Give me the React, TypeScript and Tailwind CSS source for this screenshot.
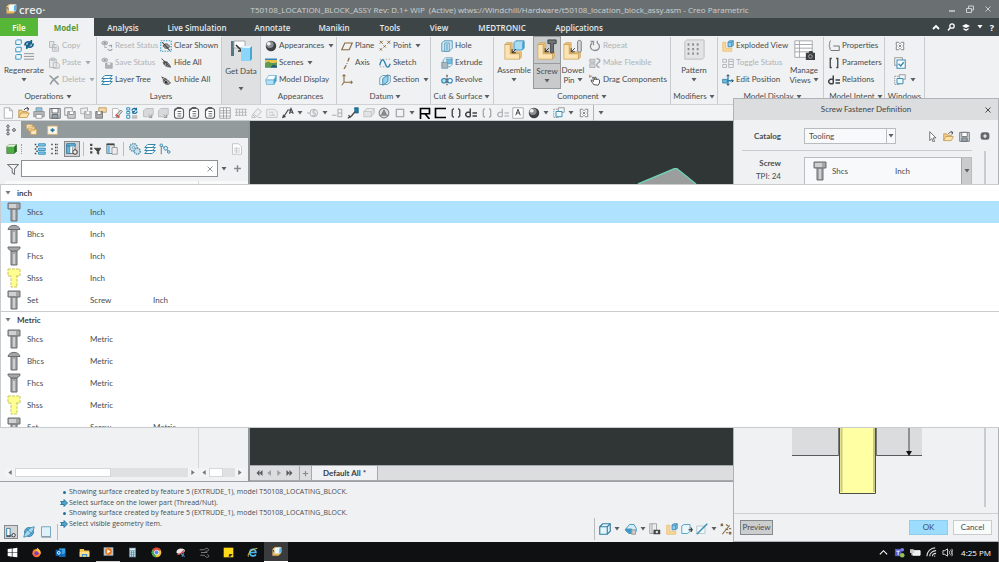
import React from 'react';
import clsx from 'clsx';

const blue = '#2b8fc0';
const sky = '#8fd3f2';
const dim = '#b4b8bb';
const tan = '#e9bb6a';

// Small glyphs, all drawn on a 16 unit grid
const glyphs: Record<string, React.ReactNode> = {
    copy: <g fill="#e4e6e7" stroke={dim} strokeWidth="1.2"><path d="M2 2h6v8H2zM6 6h5l3 3v6H6z" /><path d="M8 10h4M8 12h4" /></g>,
    paste: <g fill="#e8eaeb" stroke={dim} strokeWidth="1.2"><path d="M2 3h9v11H2zM4 1.500h5v3H4zM7 7h5l3 3v5H7z" /></g>,
    cross: <path d="M2 2c4 3 8 8 12 12M14 3C9 6 5 9 3 14" stroke="#96999b" strokeWidth="2" fill="none" />,
    resetStatus: <g fill="#c4c7c9" stroke="#9a9ea1" strokeWidth="1"><ellipse cx="5" cy="4" rx="4" ry="2.500" /><circle cx="5" cy="4" r="1" fill="#777" /><path d="M5 7v3h3" fill="none" /><path d="M10 8l4-1v3M9 12c2 3 5 2 6 0" fill="none" strokeWidth="1.500" /></g>,
    saveStatus: <g fill="#c4c7c9" stroke="#a5a9ac" strokeWidth="1"><ellipse cx="5" cy="4" rx="4" ry="2.500" /><circle cx="5" cy="4" r="1" fill="#777" /><path d="M6 8h9v7H6z" fill="#b0b3b5" /><path d="M8 8v3h5V8" fill="#eee" /></g>,
    layers: <g fill="#fff" stroke="#2d83a8" strokeWidth="1.300"><path d="M1 14l4-4h10l-4 4z" /><path d="M1 10l4-4h10l-4 4z" /><path d="M1 6l4-4h10l-4 4z" /></g>,
    clearShown: <g fill="none"><path d="M1 1h14v14H1z" stroke="#3b9fc4" strokeWidth="1.600" strokeDasharray="2 1.500" /><path d="M4 8c2-4 7-4 9 1-3 3-7 3-9-1z" fill="#999" stroke="#444" /><path d="M3 3l10 11" stroke="#333" strokeWidth="1.400" /></g>,
    hide: <g><path d="M4 7c3-3 8 1 10 6-5 1-9-2-10-6z" fill="#999" stroke="#444" /><path d="M2 2l12 12M6 5v5M9 6v6" stroke="#444" strokeWidth="1.200" fill="none" /></g>,
    unhide: <g><path d="M4 9c3-4 8 0 10 3-4 4-9 1-10-3z" fill="#aaa" stroke="#444" /><path d="M2 4l7 3M3 6l8 7" stroke="#444" strokeWidth="1.300" fill="none" /><circle cx="8" cy="11" r="1.500" fill="#222" /></g>,
    sphere: <g><circle cx="8" cy="8" r="7" fill="#3f4345" /><ellipse cx="6.500" cy="6" rx="5" ry="4.500" fill="#8d9193" /><ellipse cx="5" cy="5" rx="2.500" ry="2.200" fill="#f3f3f3" /></g>,
    scene: <g><path d="M0 2h16v12H0z" fill="#3783b7" /><path d="M0 4h16v4H0z" fill="#e9c44d" /><path d="M0 8l5-2 4 3 7-2v7H0z" fill="#5d9b4c" /><path d="M7 14l4-4 5 2v2z" fill="#24577c" /></g>,
    display: <g stroke="#6aaed0" strokeWidth="1"><path d="M1 8l4-6h10l-3 6z" fill="#f5fcff" /><path d="M1 8h11v6H2z" fill="#aee0f6" /><path d="M12 8l3-6v7l-3 5z" fill="#3897c6" /></g>,
    plane: <path d="M1 13L5 4h10l-4 9z" fill="none" stroke="#8a6a3d" strokeWidth="1.500" />,
    axis: <path d="M11 1L9 6M8 8v1M7 11l-3 5" stroke="#8a6a3d" strokeWidth="1.700" fill="none" />,
    csys: <path d="M4 1v10h11M4 11l-3 4M2 3l2-2 2 2M13 9l2 2-2 2" stroke="#8a6a3d" strokeWidth="1.400" fill="none" />,
    points: <path d="M1 1l4 4M5 1L1 5M6 7l3 3M9 7l-3 3M11 1l4 4M15 1l-4 4M1 11l3 3M4 11l-3 3" stroke="#8a6a3d" strokeWidth="1.300" fill="none" />,
    sketch: <g fill="none"><path d="M1 3h14M1 13h14" stroke="#999" strokeDasharray="2 2" /><path d="M1 11c2-9 5-9 7-3s4 8 7 1" stroke="#2a83b4" strokeWidth="1.800" /></g>,
    section: <g stroke="#4a87a5"><path d="M1 5l4-3h10v9l-4 3H1z" fill="#e9f6fb" /><path d="M5 6l7-5v9l-7 5z" fill={sky} strokeWidth="1.300" /></g>,
    hole: <g stroke="#3d83a5"><path d="M1 4l3-3h11v10l-4 4H1z" fill="#c9e9f6" /><path d="M5 4h6v11H5z" fill="#fff" /><path d="M7 5v9M9 5v9" stroke={blue} /></g>,
    extrude: <g stroke="#5c94b0"><path d="M3 4l3-3h9v9l-3 3H3z" fill="#e6f5fb" /><path d="M1 7h8v8H1z" fill="#aab8be" /><path d="M9 7l5-5" /><path d="M7 3h7v6h-5z" fill="#70c1e8" /></g>,
    revolve: <g fill="none" stroke="#2a83b4" strokeWidth="1.500"><ellipse cx="4" cy="9" rx="3" ry="3" fill="#b9e2f3" /><ellipse cx="12" cy="9" rx="3" ry="3" fill="#fff" /><path d="M8 1v14" stroke="#444" strokeDasharray="3 1" /></g>,
    repeat: <g fill="none" stroke="#8b8f92" strokeWidth="1.700"><path d="M4 4c-4 4-2 10 4 10s8-7 3-10" /><path d="M2 2h4v5M11 1v3" /></g>,
    flexible: <g fill="#d2d5d6" stroke="#a6aaad" strokeWidth="1.100"><path d="M1 3h7v4H1zM1 9h7v5H1z" /><path d="M10 2c6 1 5 4 2 6s-2 5 2 6" fill="none" strokeWidth="2" /></g>,
    drag: <g fill="#fff" stroke="#444" strokeWidth="1.200"><path d="M6 14c-1-3-4-4-3-6 1 0 2 2 3 2L5 4c2 0 2 2 3 4V4c2 0 2 3 2 4 1-2 3-1 4 0v4l-2 3z" /><path d="M1 1v4M0 3h4" stroke="#a38454" /></g>,
    explode: <g><path d="M1 3h4v8h8v4H1z" fill="#f6d79c" stroke={tan} /><path d="M8 3l2-2h5v6l-2 2H8z" fill="#8bcdec" stroke="#2b7ca5" /><path d="M8 3h5v6M13 3l2-2" stroke="#2b7ca5" fill="none" /></g>,
    toggle: <g fill="none" stroke={dim} strokeWidth="1.300"><path d="M1 3h5v4H1zM1 10h5v4H1zM9 3h6v11H9zM9 6h6M9 10h6" /></g>,
    editPos: <g fill="none" stroke="#2a83b4" strokeWidth="1.800"><path d="M8 1v14M1 9h14" /><path d="M6 3l2-2 2 2M6 13l2 2 2-2M13 7l2 2-2 2" stroke="#444" strokeWidth="1.300" /><rect x="1" y="7" width="6" height="5" fill="#6bbbe0" stroke="#2b7ca5" strokeWidth="1" /></g>,
    props: <g fill="none" stroke="#666b6e" strokeWidth="1.200"><path d="M4 1C0 3 4 6 1 8c3 1 0 4 3 6h11V8H7" /></g>,
    params: <path d="M5 2H3v12h2M11 2h2v12h-2" fill="none" stroke="#3f4446" strokeWidth="1.700" />,
    parens: <path d="M5 2L3 4v8l2 2M11 2l2 2v8l-2 2" fill="none" stroke="#3f4446" strokeWidth="1.800" />,
    parensDim: <path d="M5 2L3 4v8l2 2M11 2l2 2v8l-2 2" fill="none" stroke="#9a9ea0" strokeWidth="1.500" />,
    rel: <path d="M7 2v11M7 7H3L1 9v2l2 2h4M10 8h6M10 12h6" fill="none" stroke="#3f4446" strokeWidth="2" />,
    relDim: <path d="M7 2v11M7 7H3L1 9v2l2 2h4M10 8h6M10 12h6" fill="none" stroke="#a4a8aa" strokeWidth="1.500" />,
    closeWin: <path d="M3 3h3l2 2 2-2h3v4l-1.500 1 1.500 1v4h-3l-2-2-2 2H3V9l1.500-1L3 7zM6 6l4 4M10 6l-4 4" fill="#fff" stroke="#6b7073" strokeWidth="1.100" />,
    activate: <g fill="#fff" stroke="#3a8db5" strokeWidth="1.400"><path d="M1 1h10v10H1z" stroke="#999" /><path d="M4 4h11v11H4z" /><path d="M6 9l3 3 4-5" fill="none" strokeWidth="2" /></g>,
    windows: <g fill="#eef8fc" stroke="#3a8db5" strokeWidth="1.300"><path d="M7 1h8v6H7z" stroke="#999" /><path d="M1 3h6v11H1z" stroke="#999" strokeDasharray="2 1" /><path d="M4 6h8v7H4z" /></g>,
    page: <path d="M3 1h7l4 4v10H3zM10 1v4h4" fill="#fff" stroke="#9a9fa2" />,
    folder: <g><path d="M1 14V4h4l1 2h6v3" fill="#f6cf86" stroke="#b78c48" /><path d="M1 14l3-6h11l-3 6z" fill="#ffe3a6" stroke="#b78c48" /><path d="M8 4c2-3 4-3 6-2M12 1l2 1-1 3" fill="none" stroke="#333" strokeWidth="1.300" /></g>,
    print: <g><path d="M4 1h8v5H4z" fill="#8bc7e3" stroke="#888" /><path d="M1 6h14v7H1z" fill="#b4b7b9" stroke="#888" /><path d="M4 10h8v5H4z" fill="#fff" stroke="#888" /></g>,
    save: <g stroke="#656a6e" strokeWidth="1.200"><path d="M1 2h14v13H1z" fill="#d4d8da" /><path d="M4 2h8v6H4z" fill="#fff" /><path d="M4 10h8v5H4z" fill="#98a4ab" /></g>,
    saveAs: <g stroke="#878b8e" strokeWidth="1.200"><path d="M1 1h10v10H1z" fill="#f6f6f6" /><path d="M5 6h10v9H5z" fill="#ccc" /><path d="M7 6v4h6V6" fill="#fff" /></g>,
    saveDim: <g stroke="#9b9fa1"><path d="M1 2l9-1v8H1z" fill="#eee" /><path d="M6 6h9v9H6z" fill="#ccc" /><path d="M8 6v4h5V6" fill="#fff" /></g>,
    backup: <g><path d="M5 1h10v6H5z" fill="#f3d9a6" stroke="#b78c48" /><path d="M1 6h9v9H1z" fill="#aaa" stroke="#666" /><path d="M3 6v4h5V6" fill="#fff" stroke="#777" /></g>,
    erase: <g><path d="M2 2h7l2 3v9H2z" fill="#fff" stroke="#aaa" /><path d="M6 11l7-7 2 2-7 8z" fill="#d5d7d8" stroke="#666" /><path d="M7 10l4 4" stroke="#d6483b" strokeWidth="2" /></g>,
    regen: <g><path d="M1 1h4v3H1zM1 6h4v3H1zM1 11h4v4H1z" fill="#fff" stroke={blue} strokeWidth="1.300" /><path d="M8 12h7M8 14.500h7" stroke="#777" /><path d="M8 5c0-3 3-4 6-2M14 1v3h-3M15 6c-1 3-4 3-6 1M9 9V6h3" fill="none" stroke="#1c6f9d" strokeWidth="1.600" /></g>,
    modelDim: <g fill="#d7d9da" stroke="#b3b6b8"><path d="M2 5l3-3h10v8l-3 3H2z" /><path d="M9 10l4 4M13 10v4H9" stroke="#888" /></g>,
    listWin: <g fill="#fff" stroke="#5a5e61" strokeWidth="1.500"><rect x="2" y="2" width="12" height="13" rx="3" /><path d="M6 6h5M6 9h5M6 12h5" strokeWidth="1.200" /><path d="M2 5l4-4h5" fill="none" strokeWidth="1.800" /></g>,
    grid: <path d="M1 1h14v14H1zM1 5h14M1 8h14M1 12h14M6 1v14M10 1v14" fill="#fff" stroke="#909496" />,
    grid2: <path d="M0 3h16M0 7h16M0 11h16M2 3v9M6 3v9M10 3v9M14 3v9" fill="none" stroke="#b7babc" strokeWidth="1.300" />,
    eraserDim: <path d="M3 9l6-7 5 4-6 7zM2 10l4 4H1zM9 14h5" fill="#eee" stroke="#b0b3b5" />,
    pageDim: <path d="M1 3h10l4 3v8H1zM4 7h6M4 11h8M8 9l3 2" fill="#eee" stroke="#bcbfc1" />,
    leader: <path d="M1 14l3-1-2-2zM3 12l5-8h3M10 9l2-7 3 7M11 7h3" fill="none" stroke="#3f4446" strokeWidth="1.500" />,
    balloon: <path d="M14 8A5 5 0 1 1 4 8a5 5 0 0 1 10 0zM0 8h4M11 5H8v3h3v3H7" fill="none" stroke="#a9adaf" strokeWidth="1.200" />,
    eight: <path d="M0 11h6M8 3h5v5H8zM8 8h5v5H8z" fill="none" stroke="#adb0b2" strokeWidth="1.400" />,
    measure: <g><path d="M10 1h5v7h-4z" fill="#1e7eaa" stroke="#135c80" /><path d="M1 15l5-3 5-6M2 11l3 3" fill="none" stroke="#444" strokeWidth="1.800" /></g>,
    boxDim: <path d="M1 6l4-4h10v6l-4 5H1zM1 6h10l4-4M11 6v7" fill="#e1e3e4" stroke="#b9bcbe" />,
    tri: <g fill="#e0e1e2" stroke="#85898c" strokeWidth="1.500"><circle cx="8" cy="8" r="6.500" /><path d="M8 4l3 6H5zM2 11h12" fill="#888" /></g>,
    square: <path d="M3 3h10v10H3z" fill="none" stroke="#8f9395" strokeWidth="1.300" />,
    boldR: <path d="M2 16V2h12v7H2M8 9l6 7" fill="none" stroke="#000" strokeWidth="2.200" />,
    boldC: <path d="M16 2H2v12h14" fill="none" stroke="#000" strokeWidth="2.200" />,
    boxA: <g><path d="M1 1h14v14H1z" fill="#fff" stroke="#9a9ea0" /><path d="M5 11l3-8 3 8M6 8h4" fill="none" stroke="#444" strokeWidth="1.300" /></g>,
    tree: <g fill="#fff" stroke="#4a4e51" strokeWidth="1.300"><circle cx="4" cy="3" r="1.600" /><circle cx="4" cy="8" r="1.600" /><circle cx="4" cy="13" r="1.600" /><circle cx="12" cy="8" r="1.800" /></g>,
    folders: <g fill="#fff0d0" stroke="#d6a85c" strokeWidth="1.300"><path d="M1 1h8v6H1zM4 4h8v6H4zM7 8h8v7H7z" /></g>,
    favs: <g><path d="M1 3h14v12H1z" fill="#fffaf0" stroke="#deb56f" strokeWidth="1.300" /><path d="M8 6v6M5 9h6" stroke="#2b7ca5" strokeWidth="2.400" /></g>,
    cube: <g><path d="M1 5l3-3h10v9l-3 3H1z" fill="#4fae43" stroke="#5d7c52" /><path d="M1 5l3-3h10l-3 3z" fill="#e3f1e0" /><path d="M11 5l3-3v9l-3 3z" fill="#276e31" /></g>,
    expand: <g><path d="M6 1h9v3H6zM6 7h9v3H6zM6 12h9v3H6z" fill="#8fcbe6" stroke={blue} strokeWidth="1.200" /><path d="M1 2h2M1 8h2M1 14h2M3 5h2M3 11h2" stroke="#444" strokeWidth="1.800" /></g>,
    collapse: <path d="M3 2h2M3 8h2M3 14h2M8 2h4M8 6h4M8 10h4M8 14h4" stroke="#444" strokeWidth="2.200" strokeDasharray="2 1" />,
    cols: <g><path d="M1 1h11v13H1z" fill="#fff" stroke="#4a4e51" /><path d="M1 1h11v3H1zM1 4h4v10H1z" fill="#67b9df" stroke="#317fa5" /><circle cx="12" cy="12" r="3" fill="#eee" stroke="#333" strokeWidth="1.300" /><path d="M9 5v6" stroke="#666" /></g>,
    treeFilter: <g stroke="#444"><path d="M3 1v14" strokeWidth="3" strokeDasharray="3 2" /><path d="M7 7h9l-3 4v4l-2-1v-3z" fill="#444" /></g>,
    treeCols: <g><path d="M1 1h10v13H1z" fill="#dfe9ee" stroke="#54636c" /><path d="M2 4h3v10H2z" fill="#6db9dc" /><path d="M8 6h7v9H8z" fill="#eee" stroke="#888" /><path d="M1 2h10" stroke="#444" strokeWidth="2" /></g>,
    gears: <g fill="#cbe5f0" stroke="#6095ae" strokeWidth="1.200"><circle cx="6" cy="6" r="5" strokeWidth="2" strokeDasharray="2 1" /><circle cx="11" cy="11" r="4" strokeWidth="2" strokeDasharray="2 1" /><circle cx="6" cy="6" r="1.500" fill="#fff" /></g>,
    nodes: <g fill="#dff2fa" stroke="#3a8db5" strokeWidth="1.300"><path d="M3 3v12M3 3l10 8" stroke="#777" fill="none" /><circle cx="3" cy="3" r="1.700" /><circle cx="9" cy="7" r="2.500" /><circle cx="13" cy="12" r="1.700" /></g>,
    sheet: <g><path d="M2 1h8l4 4v10H2z" fill="#fff" stroke="#b3b6b8" /><path d="M4 7h8M4 9.500h8M4 12h8M7 5v9" stroke="#bfc2c4" /></g>,
    funnel: <path d="M1 2h14L10 8v7l-3-2V8z" fill="#f6f6f6" stroke="#74797c" strokeWidth="1.400" />,
    plus: <path d="M8 2v12M2 8h12" stroke="#85898c" strokeWidth="2.600" />,
    x: <path d="M3 3l10 10M13 3L3 13" stroke="currentColor" strokeWidth="1.900" fill="none" />,
    pointer: <path d="M4 1l9 9H9l2 5-2 1-2-5-3 3z" fill="#fff" stroke="#565a5d" strokeWidth="1.200" />,
    pill: <g><rect x="1" y="2" width="14" height="12" rx="4" fill="#63686b" /><path d="M8 5v6M5 8h6" stroke="#fff" strokeWidth="1.800" /></g>,
    go: <path d="M1 5h7V1l7 7-7 7v-4H1l3-3z" fill="#4ea6cf" stroke="#156289" strokeWidth="1.500" />,
    panel: <g><path d="M1 2h5v12H1z" fill="#fff" stroke="#317fa5" strokeWidth="1.400" /><path d="M1 13h7" stroke="#444" strokeWidth="2" /><circle cx="11" cy="12" r="2.500" fill="#eee" stroke="#333" strokeWidth="1.400" /></g>,
    globe: <g><circle cx="8" cy="8" r="6" fill="#62b2da" stroke="#2a6f94" /><path d="M1 15C2 8 8 2 15 1c-1 7-6 12-14 14z" fill="#a5d8ee" stroke="#2a7da8" /><path d="M5 4l7 7" stroke="#2a7da8" /></g>,
    pane: <g><path d="M2 1h12v13H2z" fill="#dff1fa" stroke="#6d9fb8" strokeWidth="1.200" /><path d="M2 15h13" stroke="#888" /></g>,
    wire: <g fill="#e6f5fb" stroke="#327fa3" strokeWidth="1.500"><path d="M1 5l4-4h10v10l-4 4H1z" /><path d="M1 5h10v10M11 5l4-4" fill="none" /></g>,
    shade: <g stroke="#4390b4" strokeWidth="1.200"><path d="M1 8l5-6h6l3 5v4l-3 3H5l-4-4z" fill="#d5effa" /><path d="M1 8h8v5H5l-4-3z" fill="#3c9cc8" /><path d="M9 9h5v6H9z" fill="#ccc" stroke="#999" /></g>,
    snap: <g><path d="M1 1h9v13H1z" fill="#eceded" stroke="#8b8f91" /><path d="M4 1v13" stroke="#8b8f91" /><path d="M6 9h9v6H6z" fill="#444" /><circle cx="10.500" cy="12" r="1.700" fill="#ddd" /></g>,
    box3: <g><path d="M1 4l3-2h8v9l-3 3H1z" fill="#eaf7fc" stroke="#5ba3c4" strokeWidth="1.300" /><path d="M10 9h5M13 6l2 3-2 3" fill="none" stroke="#333" strokeWidth="1.400" /></g>,
    slash: <g fill="none"><path d="M1 4h11v10H1z" fill="#eef7fa" stroke="#a8bcc5" /><path d="M1 15L15 1" stroke="#3a8db5" strokeWidth="1.800" /></g>,
    datum: <path d="M1 1l3 3M4 1L1 4M8 2l3 2M3 15L13 3M7 8l4 1M8 13h3M12 12l3 3M15 12l-3 3M12 7l3 1" fill="none" stroke="#86693f" strokeWidth="1.500" />,
};

const Glyph = ({ name, className = 'size-3' }: { name: string; className?: string }) => (
    <svg viewBox="0 0 16 16" className={clsx('shrink-0', className)} aria-hidden="true">{glyphs[name]}</svg>
);

const Caret = ({ className = 'text-[#5a5f62]' }: { className?: string }) => (
    <svg viewBox="0 0 6 4" className={clsx('h-1 w-[6px] shrink-0', className)} aria-hidden="true"><path d="M0.500 0h5L3 3.500z" fill="currentColor" /></svg>
);

interface CmdProps {
    icon: string;
    label?: string;
    caret?: boolean;
    disabled?: boolean;
}

const Cmd: React.FC<CmdProps> = ({ icon, label, caret, disabled }) => (
    <button type="button" disabled={disabled} aria-label={label ?? icon} className={clsx('flex h-[17px] items-center whitespace-nowrap', disabled ? 'text-[#b0b3b6]' : 'text-[#484d50]')}>
        <Glyph name={icon} />
        {label && <span className="ml-[2px]">{label}</span>}
        {caret && <span className="ml-1"><Caret className={disabled ? 'text-[#a5a9ac]' : 'text-[#5a5f62]'} /></span>}
    </button>
);

const Column = ({ className, items }: { className: string; items: CmdProps[] }) => (
    <div className={clsx('flex shrink-0 flex-col items-start', className)}>
        {items.map((item, i) => <Cmd key={i} {...item} />)}
    </div>
);

const Group = ({ label, caret, className, children }: { label: string; caret?: boolean; className: string; children: React.ReactNode }) => (
    <section className={clsx('flex shrink-0 flex-col border-r border-[#c9cccf]', className)}>
        <div className="flex h-[51px]">{children}</div>
        <div className="flex flex-1 items-center justify-center gap-[2px] pt-[1px] whitespace-nowrap">{label}{caret && <Caret />}</div>
    </section>
);

const Big = ({ children, lines, className, selected }: { children: React.ReactNode; lines: string[]; className: string; selected?: boolean }) => (
    <button type="button" className={clsx('flex shrink-0 flex-col items-center whitespace-nowrap leading-[10px]', className, selected && 'bg-[#c9cacc] outline outline-[#97999b]')}>
        <svg viewBox="0 0 24 24" className="mt-[2px] size-[22px]" aria-hidden="true">{children}</svg>
        <span className={clsx('mt-[2px] w-full pt-[2px]', selected && 'border-t border-[#97999b]')}>{lines[0]}</span>
        <span className="flex h-[10px] items-center gap-[2px]">{lines[1]}<Caret /></span>
    </button>
);

const bracket = (
    <g stroke="#c9a15a" strokeWidth="0.800">
        <path d="M2 6h6v10h10v6H2z" fill="#fbe3b4" />
        <path d="M2 6l2-2h6v10l-2 2V6zM8 16l2-2h10v6l-2 2v-6z" fill="#edc47a" />
    </g>
);

const tabs = [
    ['Analysis', 'w-[58px]'],
    ['Live Simulation', 'w-[90px]'],
    ['Annotate', 'w-[61px]'],
    ['Manikin', 'w-[62px]'],
    ['Tools', 'w-[50px]'],
    ['View', 'w-[48px]'],
    ['MEDTRONIC', 'w-[78px]'],
    ['Applications', 'w-[76px]'],
];

// '-' is a drop-down caret, '|' a separator
const quickTools = [
    'page', 'folder', 'print', 'save', 'saveAs', 'saveDim', 'backup', 'erase', 'regen', 'modelDim', 'modelDim', 'listWin', 'listWin', 'listWin',
    'grid', 'grid2', 'eraserDim', 'pageDim', 'leader', '-', 'balloon', '-', 'eight', 'measure', 'boxDim', 'tri', 'square', '-', 'boldR', 'boldC',
    'parens', 'rel', 'parensDim', 'relDim', 'boxA', 'sphere', '-', 'windows', '-', 'closeWin', '|', '-',
];

type ScrewKind = 'cap' | 'button' | 'flat' | 'shoulder';

const heads: Record<ScrewKind, string> = {
    cap: 'M1 1h12v6H1z',
    button: 'M1 5.500h12C12 0 2 0 1 5.500z',
    flat: 'M1 1h12v1.500L10 5H4L1 2.500z',
    shoulder: 'M1 1h12v7H1z',
};

const Screw = ({ kind }: { kind: ScrewKind }) => {
    const yellow = kind === 'shoulder';
    return (
        <svg viewBox="0 0 14 20" className="h-5 w-[14px] shrink-0" aria-hidden="true">
            <g fill={yellow ? '#ffff8f' : '#a4a6a7'} stroke={yellow ? '#c9c66c' : '#6b6f71'} strokeDasharray={yellow ? '3 1' : undefined}>
                <path d="M4 5h6v14H4z" />
                <path d={heads[kind]} />
            </g>
            {yellow && <path d="M2 2h10v5H2zM5 7h4v11H5z" fill="#ffff8f" />}
            {!yellow && <path d="M7 8v10" stroke="#cfd0d1" strokeWidth="2" />}
            {kind === 'cap' && <path d="M2 4h7" stroke="#cfd0d1" strokeWidth="4" />}
        </svg>
    );
};

interface ScrewRow {
    kind: ScrewKind;
    cells: string[];
}

const rowsFor = (unit: string): ScrewRow[] => [
    { kind: 'cap', cells: ['Shcs', unit] },
    { kind: 'button', cells: ['Bhcs', unit] },
    { kind: 'flat', cells: ['Fhcs', unit] },
    { kind: 'shoulder', cells: ['Shss', unit] },
    { kind: 'cap', cells: ['Set', 'Screw', unit] },
];

const catalog = [
    { title: 'inch', rows: rowsFor('Inch') },
    { title: 'Metric', rows: rowsFor('Metric') },
];

const messages = [
    { prompt: false, text: 'Showing surface created by feature 5 (EXTRUDE_1), model T50108_LOCATING_BLOCK.' },
    { prompt: true, text: 'Select surface on the lower part (Thread/Nut).' },
    { prompt: false, text: 'Showing surface created by feature 5 (EXTRUDE_1), model T50108_LOCATING_BLOCK.' },
    { prompt: true, text: 'Select visible geometry item.' },
];

const creoMark = (
    <>
        <path d="M2 5l3-3h9v9" fill="#f2cd83" stroke="#d8a64d" />
        <path d="M2 5v9h9l3-3V3H5v8z" fill="#e8b75a" />
        <path d="M5 4l2-2h8v7l-2 2H5z" fill="#e9f8ff" />
        <path d="M12 4l3-2v7l-3 2z" fill="#58b5e2" />
    </>
);

const taskApps: { name: string; art: React.ReactNode; state?: 'open' | 'active' }[] = [
    { name: 'Start', art: <path d="M1 3l6-1v5.500H1zM8 2l7-1v6.500H8zM1 8.500h6V14l-6-1zM8 8.500h7V15l-7-1z" fill="#fff" /> },
    { name: 'Firefox', art: <><circle cx="8" cy="9" r="6" fill="#ff7a2f" /><path d="M3 3c1 2 3 1 4 3L9 1c3 2 6 5 5 9z" fill="#ffc33b" /><circle cx="8" cy="9" r="3" fill="#7a3fc4" /><path d="M2 9c1 3 4 4 7 3-2 3-6 2-7-3z" fill="#ef3355" /></> },
    { name: 'Outlook', art: <><path d="M6 2h9v12H6z" fill="#39a5ea" /><path d="M6 8l5 3 4-3v6H6z" fill="#1269b8" /><path d="M1 4h9v9H1z" fill="#0a63b4" /><circle cx="5.500" cy="8.500" r="2" fill="none" stroke="#fff" strokeWidth="1.400" /></> },
    { name: 'Explorer', art: <><path d="M1 3h6l1 2h7v9H1z" fill="#f5c64f" /><path d="M1 7h14v7H1z" fill="#ffe08a" /><path d="M4 10h8v4h-2v-2H6v2H4z" fill="#3f93cf" /></> },
    { name: 'Media Player', state: 'open', art: <><path d="M1 2h14v12H1z" fill="#b9c6cf" /><circle cx="8" cy="8" r="5" fill="#e87a24" /><path d="M6 5l5 3-5 3z" fill="#fff" /></> },
    { name: 'Calculator', art: <><path d="M3 1h10v14H3z" fill="#54809a" /><path d="M4 2h8v3H4z" fill="#dff0f8" /><path d="M4 7h2M7 7h2M10 7h2M4 10h2M7 10h2M10 10h2M4 13h2M7 13h2M10 13h2" stroke="#d8edf7" strokeWidth="1.800" /></> },
    { name: 'Chrome', art: <><circle cx="8" cy="8" r="7" fill="#f3c52e" /><path d="M2 4.500A7 7 0 0 1 14.500 5H8L5 9z" fill="#e2443a" /><path d="M2 4.500L6 11l2 4A7 7 0 0 1 2 4.500z" fill="#3aa757" /><circle cx="8" cy="8" r="3.300" fill="#4a8af4" stroke="#fff" /></> },
    { name: 'Snip', art: <><path d="M2 8c0-6 8-7 12-4 2 4-5 5-8 7z" fill="#ede6e8" /><path d="M3 10c3 1 7-1 10-5" stroke="#d64b57" strokeWidth="2" fill="none" /><path d="M9 10l5 4M13 9l-3 5" stroke="#5a95c9" strokeWidth="1.500" /></> },
    { name: 'Connections', art: <path d="M1 4h5c3 0 2-2 5-2 4 0 4 4 0 4H9M3 8h9M2 12h5c2 0 2 3 5 3s3-4 0-4" fill="none" stroke="#9b9b9b" strokeWidth="1.100" /> },
    { name: 'Notes', art: <><path d="M1 1h14v14H1z" fill="#ffd91a" /><path d="M9 10h5l-3 4H8z" fill="#333" /></> },
    { name: 'Edge', art: <><path d="M4 8h9c0-6-9-6-9 0 0 6 7 6 9 3" fill="none" stroke="#4ab9f2" strokeWidth="2.400" /><path d="M2 14C0 9 8 2 15 2" fill="none" stroke="#f3cf4d" strokeWidth="1.300" /></> },
    { name: 'Creo', state: 'active', art: creoMark },
];

const ScrollBar = ({ className, thumb }: { className: string; thumb: string }) => (
    <div className={clsx('flex h-[9px] bg-[#dfe0e1]', className)} aria-hidden="true">
        <span className="flex w-[10px] items-center justify-center bg-[#f3f4f5]"><svg viewBox="0 0 4 6" className="h-[5px] w-1"><path d="M4 0v6L0 3z" fill="#777" /></svg></span>
        <span className={clsx('border border-[#d5d7d8] bg-white', thumb)} />
        <span className="ml-auto flex w-[10px] items-center justify-center bg-[#f3f4f5]"><svg viewBox="0 0 4 6" className="h-[5px] w-1"><path d="M0 0v6l4-3z" fill="#777" /></svg></span>
    </div>
);

const Ribbon = () => (
    <div className="flex h-[69px] shrink-0 overflow-hidden border-b border-[#cfd1d3] bg-[#eff1f3] pt-[1px]">
        <Group label="Operations" caret className="w-[97px]">
            <Big className="w-12" lines={['Regenerate']}>
                <g fill="#eef8fc" stroke={blue}><path d="M3 2l1-1h5v4l-1 1H3zM3 10l1-1h5v4l-1 1H3zM3 18l1-1h5v4l-1 1H3z" /></g>
                <path d="M12 16h11M12 19h11M12 22h11" stroke="#8c9092" />
                <path d="M13 7c0-4 4-5 7-3M20 1v4h-4M22 5c0 4-4 5-7 3M15 11V7h4" fill="none" stroke="#17638c" strokeWidth="1.800" />
            </Big>
            <Column className="w-12" items={[{ icon: 'copy', label: 'Copy', disabled: true }, { icon: 'paste', label: 'Paste', caret: true, disabled: true }, { icon: 'cross', label: 'Delete', caret: true, disabled: true }]} />
        </Group>
        <Group label="Layers" className="w-[125px] pl-1">
            <Column className="w-[59px]" items={[{ icon: 'resetStatus', label: 'Reset Status', disabled: true }, { icon: 'saveStatus', label: 'Save Status', disabled: true }, { icon: 'layers', label: 'Layer Tree' }]} />
            <Column className="w-[60px]" items={[{ icon: 'clearShown', label: 'Clear Shown' }, { icon: 'hide', label: 'Hide All' }, { icon: 'unhide', label: 'Unhide All' }]} />
        </Group>
        <div className="-mt-[1px] flex w-[39px] shrink-0 flex-col items-center border-r border-[#c9cccf] bg-[#dfe0e1]">
            <button type="button" className="flex h-full flex-col items-center whitespace-nowrap">
                <svg viewBox="0 0 24 24" className="mt-[3px] size-6" aria-hidden="true">
                    <path d="M2 2h3v15H2z" fill="#557686" /><path d="M5 2h11v7H5z" fill="#fff" stroke="#aaa" />
                    <path d="M7 6l6 6M13 8v4H9" stroke="#333" strokeWidth="1.500" fill="none" />
                    <path d="M12 9l2-2h9v13l-2 2h-9z" fill="#8bd6f8" /><path d="M12 9l2-2h9l-2 2z" fill="#dff5fd" /><path d="M21 9l2-2v13l-2 2z" fill="#46a8d5" />
                </svg>
                <span className="mt-[3px] leading-[10px]">Get Data</span>
                <span className="mt-[11px]"><Caret /></span>
            </button>
        </div>
        <Group label="Appearances" className="w-[76px] pl-1">
            <Column className="w-[70px]" items={[{ icon: 'sphere', label: 'Appearances', caret: true }, { icon: 'scene', label: 'Scenes', caret: true }, { icon: 'display', label: 'Model Display' }]} />
        </Group>
        <Group label="Datum" caret className="w-[94px] pl-1">
            <Column className="w-[38px]" items={[{ icon: 'plane', label: 'Plane' }, { icon: 'axis', label: 'Axis' }, { icon: 'csys' }]} />
            <Column className="w-[50px]" items={[{ icon: 'points', label: 'Point', caret: true }, { icon: 'sketch', label: 'Sketch' }, { icon: 'section', label: 'Section', caret: true }]} />
        </Group>
        <Group label="Cut & Surface" caret className="w-[63px]">
            <Column className="ml-[10px] w-[50px]" items={[{ icon: 'hole', label: 'Hole' }, { icon: 'extrude', label: 'Extrude' }, { icon: 'revolve', label: 'Revolve' }]} />
        </Group>
        <Group label="Component" caret className="w-[177px]">
            <Big className="w-10" lines={['Assemble']}>{bracket}<path d="M12 4l2-2h9v8l-2 2h-9z" fill="#a9dcf4" stroke="#3c8fb5" /><path d="M21 4l2-2v8l-2 2z" fill="#3f9fcb" /><path d="M14 11l-4 4M10 11v4h4" stroke="#222" fill="none" /></Big>
            <Big className="w-[26px]" selected lines={['Screw']}>{bracket}<path d="M13 1h9v4h-3v10h-3V5h-3z" fill="#6f7375" stroke="#3c4042" /><path d="M14 10l-4 4M10 10v4h4" stroke="#222" fill="none" /></Big>
            <Big className="w-[26px]" lines={['Dowel', 'Pin']}>{bracket}<path d="M17 3c0-2 4-2 4 0v10c0 2-4 2-4 0z" fill="#d5d7d8" stroke="#777" /><path d="M14 10l-4 4M10 10v4h4" stroke="#333" fill="none" /></Big>
            <Column className="ml-[3px] w-20" items={[{ icon: 'repeat', label: 'Repeat', disabled: true }, { icon: 'flexible', label: 'Make Flexible', disabled: true }, { icon: 'drag', label: 'Drag Components' }]} />
        </Group>
        <Group label="Modifiers" caret className="w-[47px]">
            <Big className="w-[46px]" lines={['Pattern']}>
                <path d="M2 3l2-2h19v19l-2 2H2z" fill="#e2e4e5" stroke="#bbb" />
                <path d="M5 6h2M10 6h2M15 6h2M5 11h2M10 11h2M15 11h2M5 16h2M10 16h2M15 16h2" stroke="#8c9092" strokeWidth="2.500" />
            </Big>
        </Group>
        <Group label="Model Display" caret className="w-[106px] pl-1">
            <Column className="w-[62px]" items={[{ icon: 'explode', label: 'Exploded View' }, { icon: 'toggle', label: 'Toggle Status', disabled: true }, { icon: 'editPos', label: 'Edit Position' }]} />
            <Big className="w-10" lines={['Manage', 'Views']}>
                <path d="M2 2h19v18H2zM2 6h19M2 10h19M2 14h19M7 2v18" fill="#fff" stroke="#a0a4a6" />
                <path d="M14 15h3l1-2h3l1 2h2v8H14z" fill="#3d4143" /><circle cx="19" cy="19" r="2" fill="none" stroke="#aaa" />
            </Big>
        </Group>
        <Group label="Model Intent" caret className="w-[61px] pl-1">
            <Column className="w-[55px]" items={[{ icon: 'props', label: 'Properties' }, { icon: 'params', label: 'Parameters' }, { icon: 'rel', label: 'Relations' }]} />
        </Group>
        <Group label="Windows" className="w-10">
            <Column className="ml-[9px]" items={[{ icon: 'closeWin' }, { icon: 'activate' }, { icon: 'windows', caret: true }]} />
        </Group>
    </div>
);

const ModelTree = () => (
    <aside className="flex w-[250px] shrink-0 flex-col border-r-2 border-[#8f9698] bg-[#eff1f3]">
        <div className="flex h-[17px] bg-[#929a9b]">
            <button type="button" aria-label="Model Tree" className="flex w-[21px] items-center justify-center bg-[#eff1f3]"><Glyph name="tree" /></button>
            <button type="button" aria-label="Folder Browser" className="flex w-5 items-center justify-center"><Glyph name="folders" className="size-[11px]" /></button>
            <button type="button" aria-label="Favorites" className="flex w-[22px] items-center justify-center"><Glyph name="favs" className="size-[11px]" /></button>
        </div>
        <div className="flex h-[22px] items-center gap-[3px] pr-[5px] pl-[6px]">
            <Glyph name="cube" />
            <span className="mr-[9px] h-[10px] border-l border-dotted border-[#999]" />
            <Glyph name="expand" />
            <Glyph name="collapse" />
            <button type="button" aria-label="Tree columns" className="flex size-4 items-center justify-center border border-[#85898c] bg-[#cfd1d3]"><Glyph name="cols" /></button>
            <span className="h-[14px] border-l border-[#b9bcbe]" />
            <Glyph name="treeFilter" className="ml-[2px] size-3" />
            <Glyph name="treeCols" className="ml-[2px] size-3" />
            <span className="ml-[2px] h-[14px] border-l border-[#b9bcbe]" />
            <Glyph name="gears" className="ml-[2px] size-3" />
            <Glyph name="layers" />
            <Glyph name="nodes" />
            <Glyph name="sheet" className="ml-auto size-3" />
        </div>
        <div className="flex h-[17px] items-center gap-[2px] pr-[6px] pl-[7px]">
            <Glyph name="funnel" />
            <label className="flex h-[17px] flex-1 items-center border border-[#8d9193] bg-white pr-[3px]">
                <input type="text" aria-label="Filter tree" className="h-full min-w-0 flex-1 px-1 outline-none" />
                <span className="text-[#8a8e91]"><Glyph name="x" className="size-2" /></span>
            </label>
            <span className="ml-[1px]"><Caret /></span>
            <button type="button" aria-label="Add filter" className="ml-1"><Glyph name="plus" className="size-[9px]" /></button>
        </div>
        <div className="mt-1 flex flex-1 flex-col pl-[5px]">
            <div className="flex h-[10px] bg-[#f9fafa] pl-[193px]"><span className="border-l border-[#d5d7d8]" /></div>
            <div className="flex-1 pl-[193px]"><div className="h-full border-l border-[#d5d7d8]" /></div>
            <div className="mb-1 flex gap-[1px]">
                <ScrollBar className="w-[193px]" thumb="w-24" />
                <ScrollBar className="w-[46px]" thumb="w-[14px]" />
            </div>
        </div>
    </aside>
);

const Graphics = () => (
    <main className="flex min-w-0 flex-1 flex-col">
        <div className="flex-1 bg-[#303536] pt-[47px] pl-[380px]">
            <svg viewBox="0 0 80 40" className="h-10 w-20" role="img" aria-label="Location block">
                <path d="M8 16L46 0l20 16v16H8z" fill="#9c9d9d" />
                <path d="M8 16L46 0l20 16" fill="none" stroke="#6fd0b4" strokeWidth="1.500" />
            </svg>
        </div>
        <div className="flex h-4 border-y border-[#a5a9ab] bg-[#dcddde] text-[#55595c]">
            <div className="flex w-[49px] items-center justify-around px-1">
                {['M6 0v8L2 4zM10 0v8L6 4z', 'M8 0v8L3 4z', 'M3 0v8l5-4z', 'M2 0v8l4-4zM6 0v8l4-4z'].map((d, i) => (
                    <button key={i} type="button" aria-label={['First tab', 'Previous tab', 'Next tab', 'Last tab'][i]}>
                        <svg viewBox="0 0 12 8" className="h-[6px] w-[9px]"><path d={d} fill={i === 1 || i === 2 ? '#9da1a3' : '#55595c'} /></svg>
                    </button>
                ))}
            </div>
            <button type="button" aria-label="New tab" className="flex w-[13px] items-center justify-center border-x border-[#a5a9ab]"><Glyph name="plus" className="size-[7px]" /></button>
            <button type="button" className="w-[66px] border-r border-[#a5a9ab] bg-[#eff1f3] font-bold text-[#3b4043]">Default All *</button>
        </div>
    </main>
);

const FastenerDialog = () => (
    <div role="dialog" aria-labelledby="dlg-title" className="absolute top-[98px] right-0 bottom-5 flex w-[266px] flex-col border border-[#b0b3b5] bg-[#eff1f3]">
        <header className="relative flex h-[21px] shrink-0 items-center justify-center bg-[#dcdddf] text-[#3f4446]">
            <h2 id="dlg-title">Screw Fastener Definition</h2>
            <button type="button" aria-label="Close" className="absolute right-[6px]"><Glyph name="x" className="size-2" /></button>
        </header>
        <div className="flex min-h-0 flex-1 pt-2 pl-2">
            <div className="flex w-[230px] flex-col">
                <div className="flex h-4 items-center">
                    <label htmlFor="catalog" className="w-[39px] text-right font-bold">Catalog</label>
                    <div className="relative ml-[23px] flex h-4 w-[92px] border border-[#b9bcbe] bg-[#f8f9fa]">
                        <select id="catalog" defaultValue="Tooling" className="h-full w-full appearance-none pl-1 outline-none"><option>Tooling</option></select>
                        <span className="pointer-events-none absolute inset-y-0 right-0 flex w-[9px] items-center justify-center border-l border-[#b9bcbe]"><Caret /></span>
                    </div>
                    <div className="ml-[31px] flex gap-[5px]">
                        <button type="button" aria-label="Select"><Glyph name="pointer" className="size-[11px]" /></button>
                        <button type="button" aria-label="Open"><Glyph name="folder" className="size-[11px]" /></button>
                        <button type="button" aria-label="Save"><Glyph name="save" className="size-[11px]" /></button>
                    </div>
                </div>
                <div className="mt-[6px] flex border-t border-[#c9cccf] pt-[6px]">
                    <div className="w-[39px] text-right leading-[13px]">
                        <b>Screw</b>
                        <div>TPI: 24</div>
                    </div>
                    <button type="button" aria-haspopup="listbox" aria-expanded="true" aria-label="Screw" className="ml-[23px] flex h-[28px] flex-1 items-center border border-[#b9bcbe] bg-[#f8f9fa] pl-2">
                        <Screw kind="cap" />
                        <span className="ml-[5px] w-[63px] text-left">Shcs</span>
                        <span>Inch</span>
                        <span className="ml-auto flex h-full w-[10px] items-center justify-center border-l border-[#a5a9ab] bg-[#c9cbcd]"><Caret /></span>
                    </button>
                </div>
                <div className="flex flex-1 flex-col items-end justify-end pr-[50px] pb-[19px]">
                    <svg viewBox="0 0 130 90" className="h-[90px] w-[130px]" role="img" aria-label="Screw preview">
                        <path d="M0 0h130v52H0z" fill="#dbdcdd" />
                        <path d="M0 51.500h47M84 51.500h46" stroke="#555a5c" />
                        <path d="M47.500 0v89.500h36V0" fill="#ffffa3" stroke="#4c5046" />
                        <path d="M49.500 0v88M82 0v88" stroke="#c9c886" strokeWidth="2" />
                        <path d="M46.500 0v52M84.500 0v52" stroke="#77797a" />
                        <path d="M117 0v50" stroke="#444" />
                        <path d="M114 47h6l-3 5z" fill="#111" />
                    </svg>
                </div>
            </div>
            <div className="flex flex-1 flex-col items-center pt-[3px] pb-[6px]">
                <Glyph name="pill" className="size-[10px]" />
                <div className="mt-[10px] flex-1 border-l-2 border-[#c9cccf]" />
            </div>
        </div>
        <footer className="flex h-[28px] shrink-0 items-center border-t border-[#cfd1d3] px-[6px]">
            <button type="button" className="h-[15px] w-[33px] border border-[#85898c] bg-[#cbcdcf]">Preview</button>
            <button type="button" className="ml-auto h-[15px] w-[39px] border border-[#8fcdee] bg-[#9bdcff]">OK</button>
            <button type="button" className="ml-[5px] h-[15px] w-[39px] border border-[#c9cccf] bg-[#f9fafa]">Cancel</button>
        </footer>
    </div>
);

const ScrewMenu = () => (
    <div role="listbox" aria-label="Screw" className="absolute inset-x-0 top-[184px] h-[244px] overflow-hidden border-y border-l border-[#c9cccf] bg-white text-[#484d50]">
        {catalog.map((section, s) => (
            <div key={section.title} role="group" aria-label={section.title} className={clsx(s > 0 && 'border-t border-[#c9cccf]')}>
                <div className="flex h-4 items-center gap-[6px] pl-1 font-bold text-[#3b4043]"><Caret className="text-[#777b7e]" />{section.title}</div>
                {section.rows.map((row, r) => (
                    <div key={r} role="option" aria-selected={s === 0 && r === 0} className={clsx('flex h-[22px] w-full items-center pl-[6px]', s === 0 && r === 0 && 'bg-[#aee2ff]')}>
                        <Screw kind={row.kind} />
                        <span className="ml-[6px] flex">{row.cells.map((cell, c) => <span key={c} className="w-[63px]">{cell}</span>)}</span>
                    </div>
                ))}
            </div>
        ))}
    </div>
);

export default function App() {
    return (
        <div className="relative flex h-screen min-h-[540px] flex-col overflow-hidden bg-[#eff1f3] font-['Lato','Open_Sans',sans-serif] text-[8px] leading-[11px] text-[#484d50]">
            <header className="relative flex h-[18px] shrink-0 items-center justify-center bg-[#6a7071] font-['Open_Sans','Noto_Sans',sans-serif] text-[#cdd0d1]">
                <div className="absolute inset-y-0 left-[5px] flex items-center gap-[2px] text-[11px] font-semibold text-[#e9ebeb]">
                    <svg viewBox="0 0 16 16" className="size-3" aria-hidden="true">{creoMark}</svg>creo·
                </div>
                <h1 className="whitespace-pre">T50108_LOCATION_BLOCK_ASSY Rev: D.1+ WIP  (Active) wtws://Windchill/Hardware/t50108_location_block_assy.asm - Creo Parametric</h1>
                <div className="absolute inset-y-0 right-[7px] flex items-center gap-[10px]">
                    <button type="button" aria-label="Minimize"><svg viewBox="0 0 8 8" className="size-2"><path d="M1 6h6" stroke="currentColor" strokeWidth="1.500" /></svg></button>
                    <button type="button" aria-label="Restore"><svg viewBox="0 0 8 8" className="size-2"><path d="M0.500 3.500h5v4h-5zM2.500 3V1h5v4H6" fill="none" stroke="currentColor" /></svg></button>
                    <button type="button" aria-label="Close window"><Glyph name="x" className="size-2" /></button>
                </div>
            </header>

            <nav className="flex h-[18px] shrink-0 items-stretch bg-[#3d4546] font-['Open_Sans','Noto_Sans',sans-serif] text-[#e6e8e9]">
                <button type="button" className="w-[38px] bg-[#56b737] font-semibold text-white">File</button>
                <button type="button" className="w-[56px] bg-[#eff1f3] font-bold text-[#57993a]">Model</button>
                {tabs.map(([label, width]) => (
                    <button key={label} type="button" className={clsx('font-semibold whitespace-nowrap', width)}>{label}</button>
                ))}
                <div className="ml-auto flex items-center gap-[7px] pr-[5px] text-white">
                    <svg viewBox="0 0 8 6" className="h-[6px] w-2"><path d="M1 5l3-3 3 3" fill="none" stroke="#fff" strokeWidth="1.800" /></svg>
                    <svg viewBox="0 0 8 8" className="size-2"><circle cx="5" cy="3" r="2.200" fill="none" stroke="#fff" strokeWidth="1.300" /><path d="M3 5L1 7.500" stroke="#fff" strokeWidth="1.500" /></svg>
                    <svg viewBox="0 0 8 8" className="size-2"><path d="M0 3l4-2 4 2-4 2zM1.500 5L4 6.500 6.500 5v1.500L4 8 1.500 6.500z" fill="#fff" /></svg>
                    <Caret className="text-white" />
                    <button type="button" className="text-[9px] font-bold">?</button>
                </div>
            </nav>

            <Ribbon />

            <div className="flex h-4 shrink-0 items-center border-b border-[#c9cccf] bg-[#f1f3f4] pl-[2px]">
                <div className="flex w-[602px] items-center justify-between">
                    {quickTools.map((tool, i) => {
                        if (tool === '-') return <Caret key={i} />;
                        if (tool === '|') return <span key={i} className="h-4 border-l border-[#b0b3b5]" />;
                        return <button key={i} type="button" aria-label={tool}><Glyph name={tool} /></button>;
                    })}
                </div>
            </div>

            <div className="flex min-h-0 flex-1 border-b border-[#9da1a3]">
                <ModelTree />
                <Graphics />
            </div>

            <div className="flex h-[60px] shrink-0 items-end pb-[2px]">
                <div className="flex h-4 w-[58px] items-center gap-[5px] border-r border-[#b9bcbe] pl-1">
                    <button type="button" aria-label="Navigator" className="flex size-[14px] items-center justify-center border border-[#85898c] bg-[#d3d5d7]"><Glyph name="panel" className="size-[11px]" /></button>
                    <button type="button" aria-label="Browser"><Glyph name="globe" /></button>
                    <button type="button" aria-label="Full screen"><Glyph name="pane" /></button>
                </div>
                <ul className="mb-[11px] ml-[2px] flex h-[42px] flex-col justify-between font-['Open_Sans','Noto_Sans',sans-serif] text-[7px] leading-[10px]">
                    {messages.map((m, i) => (
                        <li key={i} className="flex items-center gap-[1px] whitespace-nowrap">
                            <span className="flex w-2 justify-center">{m.prompt ? <Glyph name="go" className="size-2" /> : <span className="size-[3px] rounded-full bg-[#1e6f98]" />}</span>
                            {m.text}
                        </li>
                    ))}
                </ul>
                <div className="mr-[267px] ml-auto flex h-[22px] items-center gap-[3px] border-l border-[#b9bcbe] pl-1">
                    <Glyph name="wire" /><Caret />
                    <Glyph name="shade" className="ml-[2px] size-3" /><Caret />
                    <Glyph name="snap" />
                    <Glyph name="explode" className="ml-[2px] size-3" />
                    <Glyph name="box3" />
                    <Glyph name="slash" /><Caret />
                    <Glyph name="datum" />
                </div>
            </div>

            <footer className="flex h-5 shrink-0 items-stretch bg-[#0f1011] text-white">
                {taskApps.map((app) => (
                    <button key={app.name} type="button" aria-label={app.name} className={clsx('flex w-6 items-center justify-center', app.state === 'active' && 'border-b border-white bg-[#3a3b3c]', app.state === 'open' && 'border-b border-[#cfcfcf]')}>
                        <svg viewBox="0 0 16 16" className="size-[11px]">{app.art}</svg>
                    </button>
                ))}
                <div className="ml-auto flex items-center gap-[5px] border-r border-[#555] pr-[7px] font-['Open_Sans','Noto_Sans',sans-serif]">
                    <svg viewBox="0 0 12 12" className="size-[11px]"><path d="M2 8l4-4 4 4" fill="none" stroke="#fff" strokeWidth="1.200" /></svg>
                    <svg viewBox="0 0 12 12" className="size-[11px]"><path d="M1 2h7v8H1z" fill="#5059c9" /><circle cx="9" cy="3" r="2" fill="#7b83eb" /><path d="M2.500 4.500h4M4.500 4.500V9" stroke="#fff" /><circle cx="9" cy="9" r="2.500" fill="#92c353" /></svg>
                    <svg viewBox="0 0 12 12" className="size-[11px]"><path d="M3 4h8v5H3z" fill="#eee" stroke="#fff" /><path d="M0 3h4v3H0zM2 6v3" fill="#ccc" stroke="#ccc" /></svg>
                    <svg viewBox="0 0 12 12" className="size-[11px]"><path d="M1 10C1 5 5 1 10 1M4 10c0-3 3-6 7-6M7 10c0-2 1-3 4-3M9 10h1" fill="none" stroke="#ddd" strokeWidth="1.200" /></svg>
                    <svg viewBox="0 0 12 12" className="size-[11px]"><path d="M1 4h2l3-2v8L3 8H1zM7.500 4c1 1 1 3 0 4M9 3c2 2 2 4 0 6M10.500 2c2 2 2 6 0 8" fill="none" stroke="#ddd" /></svg>
                    <time className="ml-[3px]">4:25 PM</time>
                </div>
            </footer>

            <FastenerDialog />
            <ScrewMenu />
        </div>
    );
}
